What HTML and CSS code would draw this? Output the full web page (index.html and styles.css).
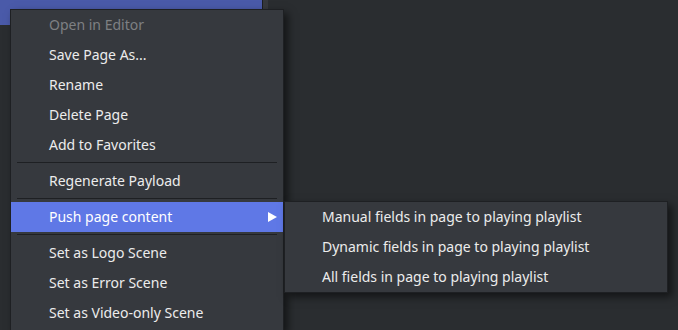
FILE: index.html
```html
<!DOCTYPE html>
<html lang="en">
<head>
    <meta charset="UTF-8">
    <title>Page context menu</title>
    <link rel="stylesheet" href="styles.css">
</head>
<body>
    <div class="app">
        <div class="page-list">
            <div class="page-row selected"></div>
        </div>
        <div class="scrollbar"></div>
        <div class="workspace"></div>
    </div>

    <div class="menu">
        <div class="item disabled">Open in Editor</div>
        <div class="item">Save Page As...</div>
        <div class="item">Rename</div>
        <div class="item">Delete Page</div>
        <div class="item">Add to Favorites</div>
        <div class="sep"></div>
        <div class="item">Regenerate Payload</div>
        <div class="sep"></div>
        <div class="item active has-sub">Push page content
            <svg class="arrow" width="9" height="10" viewBox="0 0 9 10"><path d="M0 0 L9 5 L0 10 Z" fill="#ffffff"/></svg>
        </div>
        <div class="sep"></div>
        <div class="item">Set as Logo Scene</div>
        <div class="item">Set as Error Scene</div>
        <div class="item">Set as Video-only Scene</div>
    </div>

    <div class="menu submenu">
        <div class="item">Manual fields in page to playing playlist</div>
        <div class="item">Dynamic fields in page to playing playlist</div>
        <div class="item">All fields in page to playing playlist</div>
    </div>
</body>
</html>
```

FILE: styles.css
```css
body {
    margin: 0;
    width: 678px;
    height: 330px;
    overflow: hidden;
    background-color: #2a2d30;
    font-family: "Noto Sans", "Open Sans", sans-serif;
    font-size: 14px;
}
.app {
    display: flex;
    height: 330px;
}
.page-list {
    width: 262px;
    border-right: 1px solid #1c1e21;
}
.page-row {
    height: 25px;
}
.page-row.selected {
    background-color: #4a5aa9;
}
.scrollbar {
    width: 5px;
    background-color: #36383c;
}
.workspace {
    flex: 1;
    background-color: #2a2d30;
}
.menu {
    position: absolute;
    left: 10px;
    top: 9px;
    width: 272px;
    height: 320px;
    overflow: hidden;
    background-color: #36393e;
    border: 1px solid #1e2023;
    border-bottom: none;
    box-shadow: 4px 4px 8px rgba(0, 0, 0, 0.55);
}
.item {
    position: relative;
    height: 30px;
    line-height: 30px;
    padding-left: 38px;
    color: #ececec;
    white-space: nowrap;
}
.item.disabled {
    color: #7e8083;
}
.item.active {
    background-color: #5f78e6;
    color: #ffffff;
}
.arrow {
    position: absolute;
    right: 6px;
    top: 10px;
}
.sep {
    height: 1px;
    margin: 2px 6px 3px;
    background-color: #1e2023;
}
.submenu {
    left: 284px;
    top: 201px;
    width: 382px;
    height: auto;
    border-bottom: 1px solid #1e2023;
}
.submenu .item {
    padding-left: 37px;
}
```
